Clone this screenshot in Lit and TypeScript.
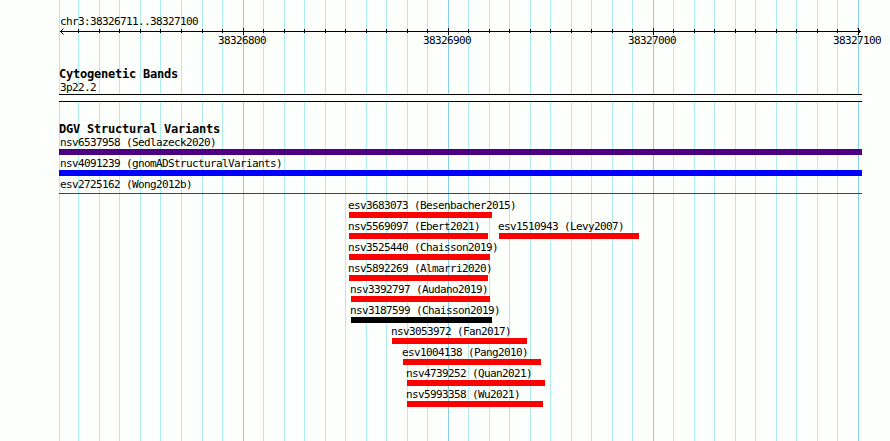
import { html, css, svg, LitElement } from "lit";
import { customElement, property } from "lit/decorators.js";

interface Feature {
  label: string;
  start: number;
  end: number;
  kind: "indigo" | "blue" | "line" | "red" | "black";
}

const LEFT = 59;
const RIGHT = 862;

const GRID = [
  59, 78, 99, 119, 140, 160, 181, 202, 222, 243, 263, 284, 304, 325, 345, 366,
  386, 407, 427, 448, 468, 489, 509, 530, 550, 571, 591, 612, 632, 653, 673,
  694, 714, 735, 755, 776, 796, 817, 837, 858,
];

const MAJOR = new Map<number, string>([
  [243, "38326800"],
  [448, "38326900"],
  [653, "38327000"],
  [858, "38327100"],
]);

const ROWS: Feature[][] = [
  [{ label: "nsv6537958 (Sedlazeck2020)", start: 59, end: 862, kind: "indigo" }],
  [{ label: "nsv4091239 (gnomADStructuralVariants)", start: 59, end: 862, kind: "blue" }],
  [{ label: "esv2725162 (Wong2012b)", start: 59, end: 862, kind: "line" }],
  [{ label: "esv3683073 (Besenbacher2015)", start: 349, end: 492, kind: "red" }],
  [
    { label: "nsv5569097 (Ebert2021)", start: 349, end: 488, kind: "red" },
    { label: "esv1510943 (Levy2007)", start: 499, end: 639, kind: "red" },
  ],
  [{ label: "nsv3525440 (Chaisson2019)", start: 349, end: 490, kind: "red" }],
  [{ label: "nsv5892269 (Almarri2020)", start: 349, end: 488, kind: "red" }],
  [{ label: "nsv3392797 (Audano2019)", start: 351, end: 490, kind: "red" }],
  [{ label: "nsv3187599 (Chaisson2019)", start: 351, end: 492, kind: "black" }],
  [{ label: "nsv3053972 (Fan2017)", start: 392, end: 527, kind: "red" }],
  [{ label: "esv1004138 (Pang2010)", start: 403, end: 541, kind: "red" }],
  [{ label: "nsv4739252 (Quan2021)", start: 407, end: 545, kind: "red" }],
  [{ label: "nsv5993358 (Wu2021)", start: 407, end: 543, kind: "red" }],
];

@customElement("variant-row")
export class VariantRow extends LitElement {
  static styles = css`
    :host {
      display: flex;
      height: 21px;
    }

    .feature {
      flex: none;
      height: 21px;
    }

    .label {
      height: 13px;
      line-height: 13px;
      white-space: pre;
    }

    .wide .label {
      padding-left: 1px;
    }

    .narrow .label {
      margin-left: -1px;
    }

    .bar {
      height: 6px;
    }

    .indigo {
      background: #4b0082;
    }

    .blue {
      background: #0000ff;
    }

    .red {
      background: #ff0000;
    }

    .black {
      background: #000;
    }

    .line {
      height: 1px;
      margin-top: 2px;
      background: #e00000;
    }
  `;

  @property({ attribute: false }) features: Feature[] = [];

  render() {
    let x = LEFT;
    return this.features.map((f) => {
      const gap = f.start - x;
      x = f.end;
      return html`<div
        class="feature ${f.start === LEFT ? "wide" : "narrow"}"
        style="margin-left:${gap}px;width:${f.end - f.start}px"
      >
        <div class="label">${f.label}</div>
        <div class="bar ${f.kind}"></div>
      </div>`;
    });
  }
}

@customElement("app-root")
export class AppRoot extends LitElement {
  static styles = css`
    :host {
      display: block;
      position: relative;
      width: 890px;
      height: 441px;
      overflow: hidden;
      background: #fdfffd;
      color: #000;
      font-family: "DejaVu Sans Mono", monospace;
      font-size: 11px;
      letter-spacing: -0.622px;
    }

    .grid {
      position: absolute;
      inset: 0;
    }

    .minor {
      fill: #afeeee;
    }

    .major {
      fill: #87ceeb;
    }

    .panel {
      position: relative;
      width: 803px;
      padding: 15px 0 0 59px;
    }

    .range,
    .band-name {
      height: 13px;
      line-height: 13px;
      padding-left: 1px;
    }

    .axis {
      display: block;
      overflow: visible;
      height: 40px;
    }

    .axis text {
      font-size: 11px;
    }

    .title {
      height: 13px;
      line-height: 13px;
      font-size: 12px;
      font-weight: bold;
      letter-spacing: -0.224px;
    }

    .band {
      height: 6px;
      border: solid #000;
      border-width: 1px 0;
      background: #fdfffd;
      margin-bottom: 21px;
    }
  `;

  renderGrid() {
    return html`<svg class="grid" width="890" height="441" shape-rendering="crispEdges">
      ${GRID.map(
        (x) => svg`<rect class=${MAJOR.has(x) ? "major" : "minor"} x=${x} y="0" width="1" height="441" />`
      )}
    </svg>`;
  }

  renderAxis() {
    return html`<svg class="axis" width=${RIGHT - LEFT} height="40" viewBox="59 28 803 40">
      <g shape-rendering="crispEdges">
        <rect x="60" y="31" width="801" height="1" />
        ${GRID.slice(1).map((x) =>
          MAJOR.has(x)
            ? svg`<rect x=${x} y="28" width="1" height="7" />`
            : svg`<rect x=${x} y="29" width="1" height="4" />`
        )}
      </g>
      <path d="M63.5 28.5L60.5 31.5L63.5 34.5M857.5 28.5L860.5 31.5L857.5 34.5" fill="none" stroke="#000" />
      ${[...MAJOR].map(([x, text]) => svg`<text x=${x - 25} y="44">${text}</text>`)}
    </svg>`;
  }

  render() {
    return html`
      ${this.renderGrid()}
      <div class="panel">
        <div class="range">chr3:38326711..38327100</div>
        ${this.renderAxis()}
        <div class="title">Cytogenetic Bands</div>
        <div class="band-name">3p22.2</div>
        <div class="band"></div>
        <div class="title">DGV Structural Variants</div>
        ${ROWS.map((row) => html`<variant-row .features=${row}></variant-row>`)}
      </div>
    `;
  }
}
